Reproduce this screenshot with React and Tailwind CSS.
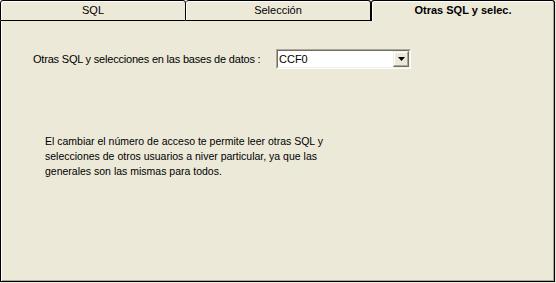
const font = { fontFamily: '"Liberation Sans", Arial, sans-serif' };

const Tab = ({ label, active, className }) => (
  <div
    className={
      'flex h-[21px] items-center justify-center border-t border-black text-[11px] ' +
      (active
        ? 'border-l border-r font-bold shadow-[inset_1px_1px_0_#fff,inset_-1px_0_0_#aca899] rounded-tr-[3px] rounded-tl-[3px] '
        : 'border-b shadow-[inset_1px_1px_0_#fff] rounded-tl-[3px] rounded-tr-[3px] ') +
      className
    }
  >
    <span className="-mt-px">{label}</span>
  </div>
);

export default function App() {
  return (
    <div
      className="h-[283px] w-[556px] overflow-hidden bg-[#ece9d8] text-black"
      style={font}
    >
      <div className="flex h-[282px] w-[555px] flex-col">
        <div className="flex h-[21px] shrink-0">
          <Tab label="SQL" className="w-[186px] border-l border-r" />
          <Tab label="Selección" className="w-[185px] border-r" />
          <Tab label="Otras SQL y selec." active className="w-[184px]" />
        </div>
        <div className="flex-1 border-b border-l border-r border-black shadow-[inset_1px_0_0_#fff,inset_-1px_-1px_0_#aca899]">
          <div className="mt-[28px] flex items-center pl-[32px]">
            <span className="w-[243px] text-[11px] tracking-[-0.2px]">
              Otras SQL y selecciones en las bases de datos :
            </span>
            <div className="flex h-[20px] w-[135px] border border-b-white border-l-[#aca899] border-r-white border-t-[#aca899] bg-white">
              <div className="flex flex-1 items-center border border-b-[#f1efe2] border-l-[#716f64] border-r-[#f1efe2] border-t-[#716f64]">
                <span className="pl-[1px] text-[11px]">CCF0</span>
                <div className="ml-auto flex h-[16px] w-[16px] items-center justify-center border border-b-[#716f64] border-l-[#f1efe2] border-r-[#716f64] border-t-[#f1efe2] bg-[#ece9d8] shadow-[inset_-1px_-1px_0_#aca899,inset_1px_1px_0_#fff]">
                  <svg width="7" height="4" viewBox="0 0 7 4">
                    <path d="M0 0h7L3.5 4z" fill="#000" />
                  </svg>
                </div>
              </div>
            </div>
          </div>
          <p className="mt-[65px] pl-[44px] text-[10.5px] leading-[15px]">
            El cambiar el número de acceso te permite leer otras SQL y
            <br />
            selecciones de otros usuarios a niver particular, ya que las
            <br />
            generales son las mismas para todos.
          </p>
        </div>
      </div>
    </div>
  );
}
